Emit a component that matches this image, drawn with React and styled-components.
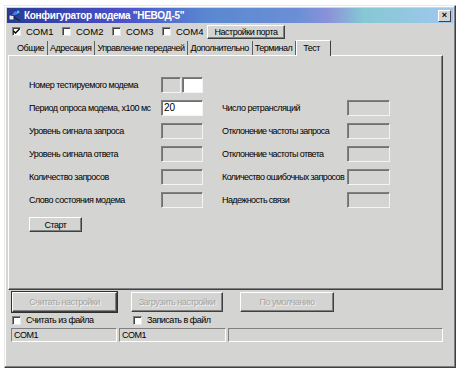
import React from "react";
import styled, { createGlobalStyle, css } from "styled-components";

const Global = createGlobalStyle`
  html, body {
    margin: 0;
    padding: 0;
    background: #ffffff;
  }
  body {
    font-family: "Liberation Sans", Arial, sans-serif;
    font-size: 10px;
    color: #000;
  }
`;

const small = css`
  font-size: 9px;
  letter-spacing: -0.5px;
  white-space: nowrap;
`;

const Window = styled.div`
  margin: 5px 0 0 4px;
  width: 452px;
  height: 363px;
  box-sizing: border-box;
  background: #d4d4d2;
  border: 1px solid;
  border-color: #e8e8e8 #404040 #404040 #e8e8e8;
  box-shadow: inset -1px -1px 0 #808080, inset 1px 1px 0 #ffffff;
  padding: 2px;
  display: flex;
  flex-direction: column;
`;

const TitleBar = styled.div`
  height: 15px;
  display: flex;
  align-items: center;
  padding: 0 2px 0 1px;
  background: linear-gradient(
    90deg,
    #283c96 0%,
    #4a4fc8 25%,
    #5a88d0 45%,
    #6b8fd6 65%,
    #8a92d8 72%,
    #86c8d4 80%,
    #a2c6ee 100%
  );
  color: #fff;
  font-weight: bold;
  font-size: 10px;
  gap: 3px;
`;

const TitleText = styled.span`
  flex: 1;
  letter-spacing: -0.3px;
`;

const CloseButton = styled.div`
  width: 11px;
  height: 10px;
  background: #d4d4d2;
  border: 1px solid;
  border-color: #fff #404040 #404040 #fff;
  color: #000;
  font-size: 9px;
  line-height: 9px;
  text-align: center;
  font-weight: bold;
`;

const PortRow = styled.div`
  height: 17px;
  display: flex;
  align-items: center;
  padding-left: 5px;
`;

const CheckItem = styled.label`
  display: flex;
  align-items: center;
  gap: 5px;
  width: ${({ w }) => w || "auto"};
  ${({ compact }) => (compact ? small : "font-size: 9.5px;")}
`;

const Box = styled.span`
  width: 9px;
  height: 9px;
  box-sizing: border-box;
  background: #fff;
  border: 1px solid;
  border-color: #808080 #e8e8e8 #e8e8e8 #808080;
  box-shadow: inset 1px 1px 0 #404040;
  display: flex;
  align-items: center;
  justify-content: center;
`;

const Button = styled.div`
  box-sizing: border-box;
  width: ${({ w }) => w};
  height: ${({ h }) => h || "14px"};
  margin-left: ${({ ml }) => ml || "0"};
  display: flex;
  align-items: center;
  justify-content: center;
  background: #d4d4d2;
  border: 1px solid;
  border-color: #ffffff #404040 #404040 #ffffff;
  box-shadow: inset -1px -1px 0 #808080;
  color: ${({ disabled }) => (disabled ? "#a4a4a4" : "#000")};
  text-shadow: ${({ disabled }) => (disabled ? "1px 1px 0 #f2f2f2" : "none")};
  outline: ${({ primary }) => (primary ? "1px solid #303030" : "none")};
  ${small}
`;

const Tabs = styled.div`
  height: 15px;
  display: flex;
  align-items: flex-end;
  padding-left: 8px;
`;

const Tab = styled.div`
  height: 14px;
  display: flex;
  align-items: center;
  box-sizing: border-box;
  padding: 0 3px 0 2px;
  border-right: 1px solid #606060;
  ${small}
  ${({ active }) =>
    active &&
    `
    height: 16px;
    border-top: 1px solid #ffffff;
    border-left: 1px solid #ffffff;
    border-right: 1px solid #404040;
    margin-bottom: -1px;
    position: relative;
    z-index: 1;
    background: #d4d4d2;
    align-items: flex-start;
    padding: 2px 10px 0 6px;
  `}
`;

const Panel = styled.div`
  margin-left: 1px;
  width: 435px;
  height: 235px;
  box-sizing: border-box;
  border: 1px solid;
  border-color: #ffffff #404040 #404040 #ffffff;
  box-shadow: inset -1px -1px 0 #808080;
  padding: 21px 0 0 20px;
`;

const Grid = styled.div`
  display: grid;
  grid-template-columns: 132px 61px 125px 43px;
  grid-auto-rows: 16px;
  row-gap: 7px;
  align-items: center;
`;

const Label = styled.div`
  ${small}
  letter-spacing: ${({ tight }) => (tight ? "-0.6px" : "-0.5px")};
`;

const Field = styled.div`
  box-sizing: border-box;
  width: ${({ w }) => w};
  height: 16px;
  background: ${({ white }) => (white ? "#ffffff" : "#d4d4d2")};
  border: 1px solid;
  border-color: #808080 #f4f4f4 #f4f4f4 #808080;
  box-shadow: inset 1px 1px 0 #707070;
  font-size: 10px;
  padding: 1px 0 0 2px;
`;

const Pair = styled.div`
  display: flex;
  gap: 1px;
`;

const StartRow = styled.div`
  margin-top: 9px;
`;

const ButtonRow = styled.div`
  display: flex;
  margin-top: 1px;
  padding-left: 5px;
  gap: 14px;
  height: 21px;
  align-items: center;
`;

const FileRow = styled.div`
  display: flex;
  align-items: center;
  height: 14px;
  padding-left: 5px;
  margin-top: 1px;
`;

const StatusBar = styled.div`
  display: flex;
  gap: 2px;
  padding-left: 4px;
  margin-top: 1px;
  height: 14px;
`;

const StatusPanel = styled.div`
  box-sizing: border-box;
  width: ${({ w }) => w};
  height: 14px;
  border: 1px solid;
  border-color: #808080 #ffffff #ffffff #808080;
  padding: 1px 0 0 2px;
  ${small}
`;

const AppIcon = () => (
  <svg width="13" height="13" viewBox="0 0 13 13">
    <rect x="1" y="6" width="5" height="5" fill="#e8e8e8" stroke="#203080" />
    <path d="M3 6 L7 1 L11 5 L7 7 Z" fill="#5070e0" stroke="#102060" strokeWidth="0.8" />
    <path d="M6 8 L12 12" stroke="#202020" strokeWidth="1.2" />
    <circle cx="10" cy="3" r="1.5" fill="#40c0f0" />
  </svg>
);

const Check = ({ on }) => (
  <Box>
    {on && (
      <svg width="7" height="7" viewBox="0 0 7 7">
        <path d="M0.5 3 L2.5 5 L6.5 1" stroke="#000" strokeWidth="1.4" fill="none" />
      </svg>
    )}
  </Box>
);

const left = [
  "Уровень сигнала запроса",
  "Уровень сигнала ответа",
  "Количество запросов",
  "Слово состояния модема",
];
const right = [
  "Отклонение частоты запроса",
  "Отклонение частоты ответа",
  "Количество ошибочных запросов",
  "Надежность связи",
];

export default function App() {
  return (
    <>
      <Global />
      <Window>
        <TitleBar>
          <AppIcon />
          <TitleText>Конфигуратор модема "НЕВОД-5"</TitleText>
          <CloseButton>×</CloseButton>
        </TitleBar>

        <PortRow>
          <CheckItem w="50px">
            <Check on /> COM1
          </CheckItem>
          <CheckItem w="50px">
            <Check /> COM2
          </CheckItem>
          <CheckItem w="50px">
            <Check /> COM3
          </CheckItem>
          <CheckItem w="45px">
            <Check /> COM4
          </CheckItem>
          <Button w="78px">Настройки порта</Button>
        </PortRow>

        <Tabs>
          <Tab>Общие</Tab>
          <Tab>Адресация</Tab>
          <Tab>Управление передачей</Tab>
          <Tab>Дополнительно</Tab>
          <Tab>Терминал</Tab>
          <Tab active>Тест</Tab>
        </Tabs>

        <Panel>
          <Grid>
            <Label>Номер тестируемого модема</Label>
            <Pair>
              <Field w="20px" />
              <Field w="21px" white />
            </Pair>
            <span />
            <span />

            <Label>Период опроса модема, х100 мс</Label>
            <Field w="42px" white>
              20
            </Field>
            <Label>Число ретрансляций</Label>
            <Field w="43px" />

            {left.map((l, i) => (
              <React.Fragment key={l}>
                <Label>{l}</Label>
                <Field w="42px" />
                <Label tight>{right[i]}</Label>
                <Field w="43px" />
              </React.Fragment>
            ))}
          </Grid>
          <StartRow>
            <Button w="53px" h="15px">
              Старт
            </Button>
          </StartRow>
        </Panel>

        <ButtonRow>
          <Button w="105px" h="20px" disabled primary>
            Считать настройки
          </Button>
          <Button w="92px" h="20px" disabled>
            Загрузить настройки
          </Button>
          <Button w="94px" h="20px" ml="3px" disabled>
            По умолчанию
          </Button>
        </ButtonRow>

        <FileRow>
          <CheckItem w="121px" compact>
            <Check /> Считать из файла
          </CheckItem>
          <CheckItem compact>
            <Check /> Записать в файл
          </CheckItem>
        </FileRow>

        <StatusBar>
          <StatusPanel w="106px">COM1</StatusPanel>
          <StatusPanel w="107px">COM1</StatusPanel>
          <StatusPanel w="215px" />
        </StatusBar>
      </Window>
    </>
  );
}
